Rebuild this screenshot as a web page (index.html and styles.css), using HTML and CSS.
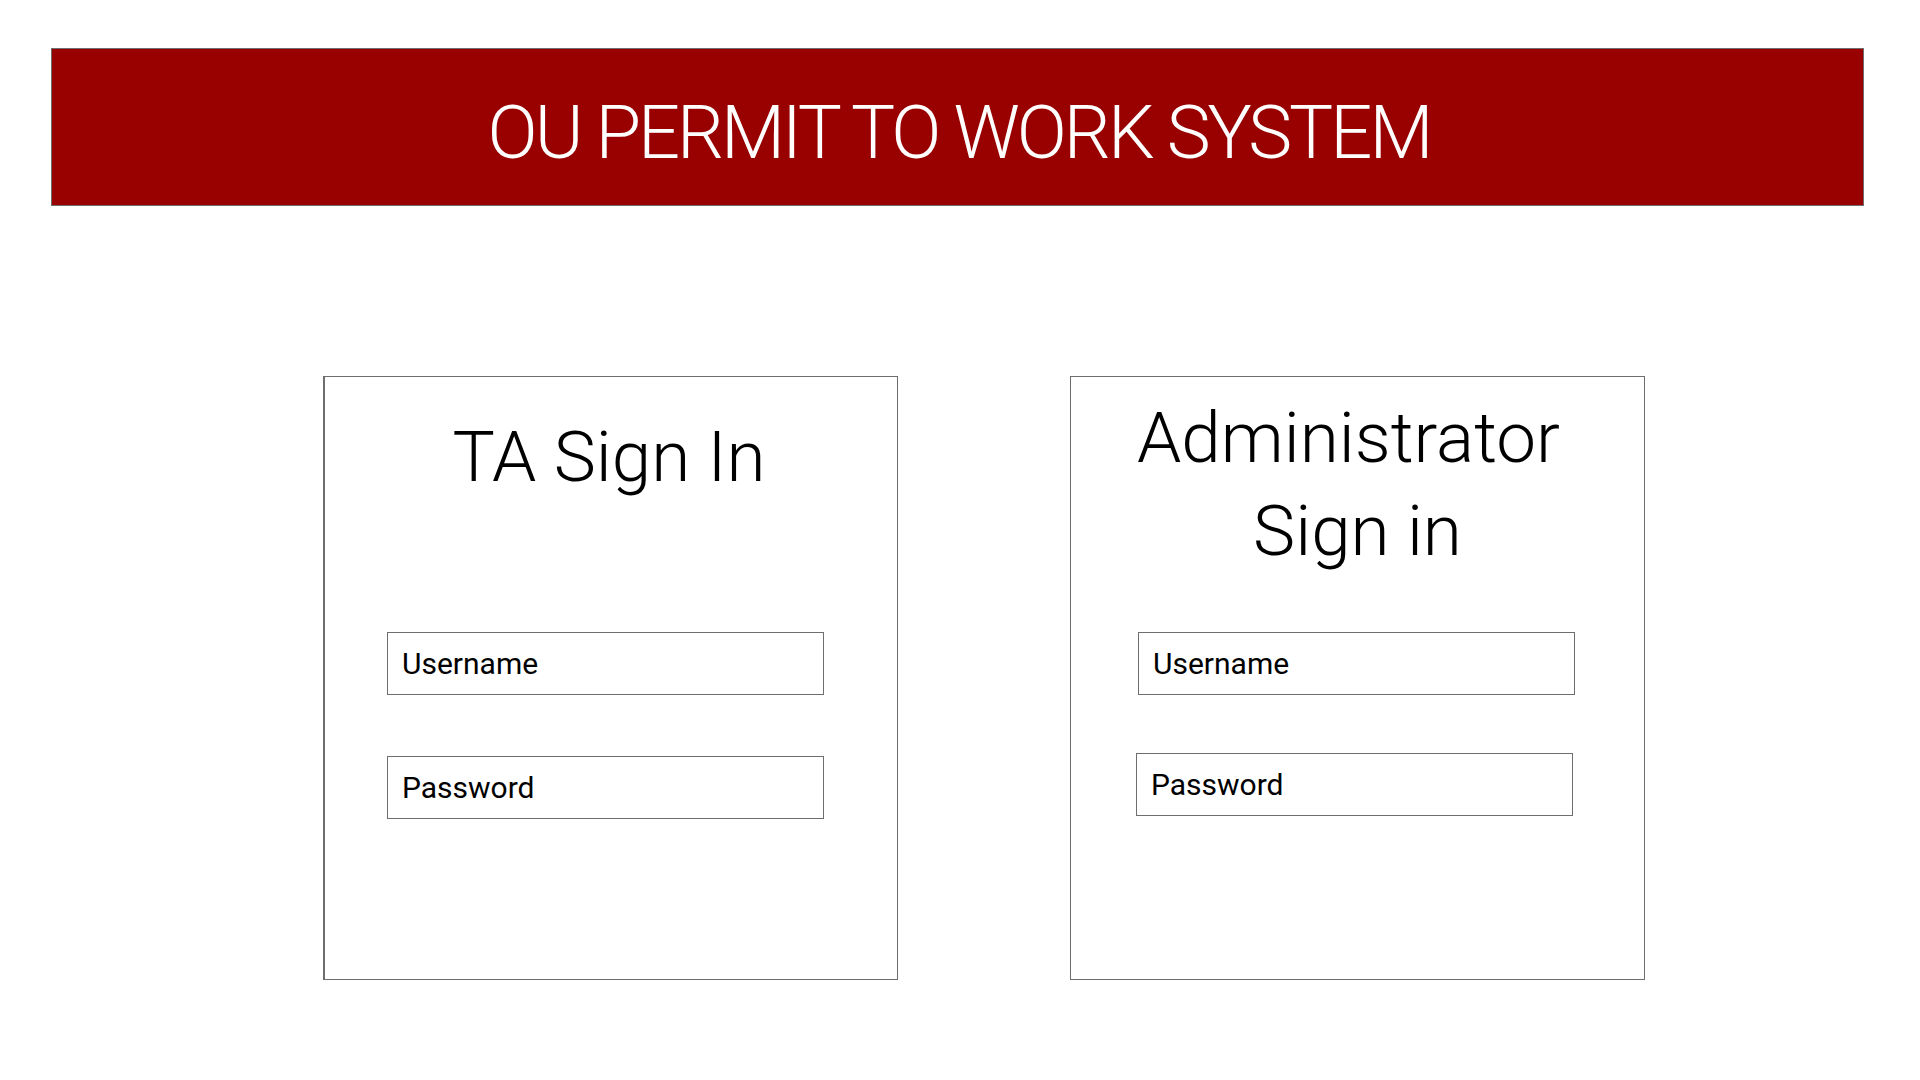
FILE: index.html
```html
<!DOCTYPE html>
<html lang="en">
<head>
<meta charset="utf-8">
<title>OU Permit to Work System</title>
<link rel="stylesheet" href="styles.css">
</head>
<body>
  <header class="banner">
    <h1 class="banner-title">OU PERMIT TO WORK SYSTEM</h1>
  </header>
  <main class="cards">
    <section class="card card-ta">
      <div class="card-head card-head-ta">
        <h2 class="card-title">TA Sign In</h2>
      </div>
      <input class="field" type="text" placeholder="Username">
      <input class="field field-gap" type="password" placeholder="Password">
    </section>
    <section class="card card-admin">
      <div class="card-head card-head-admin">
        <h2 class="card-title"><span class="title-line title-line-first">Administrator</span><span class="title-line">Sign in</span></h2>
      </div>
      <input class="field" type="text" placeholder="Username">
      <input class="field field-gap-admin" type="password" placeholder="Password">
    </section>
  </main>
</body>
</html>
```

FILE: styles.css
```css
html, body {
  margin: 0;
  padding: 0;
  background: #ffffff;
  font-family: Roboto, "Noto Sans", sans-serif;
  color: #000;
}

.banner {
  margin: 48px 56px 0 51px;
  height: 158px;
  box-sizing: border-box;
  border: 1px solid #6e6e6e;
  background: #990000;
  display: flex;
  align-items: center;
  justify-content: center;
}

.banner-title {
  margin: 12px 0 0 3px;
  font-weight: 300;
  font-size: 74px;
  line-height: 1;
  letter-spacing: -3px;
  color: #ffffff;
}

.cards {
  display: flex;
  gap: 172px;
  padding-left: 323px;
  margin-top: 170px;
}

.card {
  width: 575px;
  height: 604px;
  box-sizing: border-box;
  border: 1px solid #6e6e6e;
  display: flex;
  flex-direction: column;
  align-items: flex-start;
}

.card-ta {
  border-left-width: 2px;
}

.card-head {
  width: 100%;
  height: 255px;
  box-sizing: border-box;
}

.card-head-ta {
  padding-top: 33px;
}

.card-head-admin {
  padding-top: 14px;
}

.card-title {
  margin: 0;
  text-align: center;
  font-weight: 300;
  font-size: 71px;
  line-height: 93px;
}

.card-ta .card-title {
  padding-right: 4px;
}

.title-line {
  display: block;
}

.title-line-first {
  padding-right: 18px;
}

.field {
  width: 437px;
  height: 63px;
  box-sizing: border-box;
  margin: 0 0 0 62px;
  padding: 0 0 0 14px;
  border: 1px solid #6e6e6e;
  border-radius: 0;
  background: #fff;
  font-family: Roboto, "Noto Sans", sans-serif;
  font-size: 30px;
  color: #000;
  outline: none;
}

.field::placeholder {
  color: #000;
  opacity: 1;
}

.card-admin .field {
  margin-left: 67px;
}

.field-gap {
  margin-top: 61px;
}

.card-admin .field-gap-admin {
  margin-top: 58px;
  margin-left: 65px;
}
```
